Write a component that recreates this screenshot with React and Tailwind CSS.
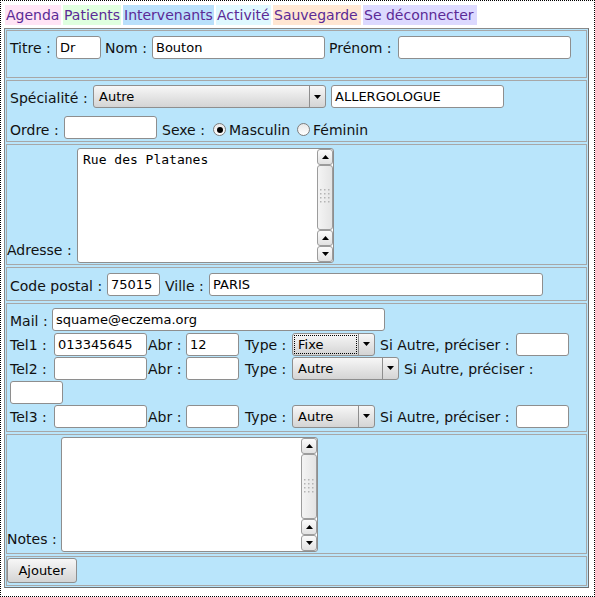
import React from "react";

const CELL = "bg-[#b9e5fb] border border-[#a7a7a7]";

function TextInput({ cls = "", value = "" }) {
  return (
    <div
      className={`h-[23px] shrink-0 bg-white border border-[#8e8e8e] rounded-[3px] pl-[3px] text-[13px] leading-[21px] text-black whitespace-nowrap overflow-hidden ${cls}`}
    >
      {value}
    </div>
  );
}

function Tri({ up = false }) {
  return (
    <svg width="7" height="4" viewBox="0 0 7 4" className="block">
      {up ? <path d="M0 4h7L3.5 0z" fill="#000" /> : <path d="M0 0h7L3.5 4z" fill="#000" />}
    </svg>
  );
}

function Select({ cls = "", value, focus = false }) {
  return (
    <div
      className={`h-[23px] shrink-0 flex rounded-[3px] border border-[#8e8e8e] bg-gradient-to-b from-[#f7f7f7] to-[#d4d4d4] text-[13px] text-black ${cls}`}
    >
      <div className="flex-1 min-w-0 p-[1px]">
        <div
          className={`h-full pl-[3px] leading-[17px] border ${focus ? "border-dotted border-black" : "border-transparent"}`}
        >
          {value}
        </div>
      </div>
      <div className="w-[16px] border-l border-[#8e8e8e] flex items-center justify-center">
        <Tri />
      </div>
    </div>
  );
}

function SbBtn({ up }) {
  return (
    <div className="h-[16px] shrink-0 rounded-[3px] border border-[#9c9c9c] bg-gradient-to-b from-[#fbfbfb] to-[#e2e2e2] flex items-center justify-center">
      <Tri up={up} />
    </div>
  );
}

function Scrollbar() {
  return (
    <div className="w-[16px] shrink-0 flex flex-col">
      <SbBtn up />
      <div className="flex-1 rounded-[3px] border border-[#9c9c9c] bg-gradient-to-r from-[#f4f4f4] to-[#e4e4e4] flex items-center justify-center">
        <svg width="10" height="16" viewBox="0 0 10 16" className="block">
          {[0, 1, 2].map((c) =>
            [0, 1, 2, 3, 4].map((r) => (
              <rect key={`${c}-${r}`} x={c * 4} y={r * 4} width="1.5" height="1.5" fill="#b4b4b4" />
            ))
          )}
        </svg>
      </div>
      <SbBtn up />
      <SbBtn />
    </div>
  );
}

function TextArea({ cls = "", value = "" }) {
  return (
    <div className={`w-[257px] h-[115px] shrink-0 bg-white border border-[#8e8e8e] rounded-[3px] flex ${cls}`}>
      <div className="flex-1 pl-[5px] pt-[2px] font-['DejaVu_Sans_Mono',monospace] text-[13px] leading-[17px] text-black whitespace-pre">
        {value}
      </div>
      <Scrollbar />
    </div>
  );
}

function Radio({ checked }) {
  return (
    <div className="w-[13px] h-[13px] shrink-0 rounded-full border border-[#7d7d7d] bg-gradient-to-b from-[#e8e8e8] to-[#ffffff] flex items-center justify-center">
      {checked && <div className="w-[6px] h-[6px] rounded-full bg-black" />}
    </div>
  );
}

function L({ children, cls = "" }) {
  return <span className={`whitespace-pre shrink-0 ${cls}`}>{children}</span>;
}

const NAV = [
  { t: "Agenda", c: "bg-[#ffe4f5] w-[56px]" },
  { t: "Patients", c: "bg-[#dfffdf] w-[58px]" },
  { t: "Intervenants", c: "bg-[#b9e0fb] w-[91px]" },
  { t: "Activité", c: "bg-[#dff8ff] w-[55px]" },
  { t: "Sauvegarde", c: "bg-[#ffe6d2] w-[88px]" },
  { t: "Se déconnecter", c: "bg-[#dcd9ff] w-[114px]" },
];

function TelRow({ n, tel, abr, sel, selW, wrap }) {
  return (
    <>
      <div className="flex items-center">
        <L cls="w-[44px] mt-[2px]">{`Tel${n} :`}</L>
        <TextInput cls="w-[93px]" value={tel} />
        <L cls="w-[39px] pl-[1px] mt-[2px]">Abr :</L>
        <TextInput cls="w-[53px]" value={abr} />
        <L cls="w-[53px] pl-[6px] mt-[2px]">Type :</L>
        <Select cls={selW} value={sel} focus={n === 1} />
        <L cls={wrap ? "pl-[5px] mt-[2px]" : "w-[141px] pl-[5px] mt-[2px]"}>Si Autre, préciser :</L>
        {!wrap && <TextInput cls="w-[53px]" />}
      </div>
      {wrap && (
        <div className="flex items-center">
          <TextInput cls="w-[53px]" />
        </div>
      )}
    </>
  );
}

export default function App() {
  return (
    <div className="w-[595px] h-[597px] border border-dotted border-black bg-white font-['DejaVu_Sans',sans-serif] text-[14px] text-[#111]">
      <div className="flex gap-[2px] ml-[4px] mt-[4px]">
        {NAV.map((n) => (
          <div key={n.t} className={`h-[20px] leading-[20px] pl-[1px] text-[#5b2a96] whitespace-nowrap ${n.c}`}>
            {n.t}
          </div>
        ))}
      </div>

      <div className="ml-[3px] mt-[3px] w-[585px] h-[560px] border border-[#8a8a8a] border-r-[#6e6e6e] border-b-[#6e6e6e] bg-[#b9e5fb] p-[1px] flex flex-col gap-[2px]">
        {/* Row 1 */}
        <div className={`${CELL} h-[48px] pt-[5px] pl-[3px]`}>
          <div className="flex items-center">
            <L cls="w-[46px] mt-[2px]">Titre :</L>
            <TextInput cls="w-[45px]" value="Dr" />
            <L cls="w-[51px] pl-[4px] mt-[2px]">Nom :</L>
            <TextInput cls="w-[173px]" value="Bouton" />
            <L cls="w-[73px] pl-[4px] mt-[2px]">Prénom :</L>
            <TextInput cls="w-[173px]" />
          </div>
        </div>

        {/* Row 2 */}
        <div className={`${CELL} h-[62px] pt-[4px] pl-[3px]`}>
          <div className="flex items-center">
            <L cls="w-[83px] mt-[3px]">Spécialité :</L>
            <Select cls="w-[233px]" value="Autre" />
            <span className="w-[5px] shrink-0" />
            <TextInput cls="w-[173px]" value="ALLERGOLOGUE" />
          </div>
          <div className="flex items-center mt-[5px]">
            <L cls="w-[54px] mt-[6px]">Ordre :</L>
            <TextInput cls="w-[93px]" />
            <L cls="w-[56px] pl-[5px] mt-[6px]">Sexe :</L>
            <div className="mt-[5px]">
              <Radio checked />
            </div>
            <L cls="w-[71px] pl-[3px] mt-[6px]">Masculin</L>
            <div className="mt-[5px]">
              <Radio />
            </div>
            <L cls="pl-[3px] mt-[6px]">Féminin</L>
          </div>
        </div>

        {/* Row 3 */}
        <div className={`${CELL} h-[121px] pt-[3px]`}>
          <div className="flex items-end">
            <L cls="w-[70px] mb-[2px]">Adresse :</L>
            <TextArea value="Rue des Platanes" />
          </div>
        </div>

        {/* Row 4 */}
        <div className={`${CELL} h-[34px] pt-[5px] pl-[3px]`}>
          <div className="flex items-center">
            <L cls="w-[97px] mt-[3px]">Code postal :</L>
            <TextInput cls="w-[53px]" value="75015" />
            <L cls="w-[49px] pl-[5px] mt-[3px]">Ville :</L>
            <TextInput cls="w-[334px]" value="PARIS" />
          </div>
        </div>

        {/* Row 5 */}
        <div className={`${CELL} h-[130px] pt-[4px] pl-[3px] flex flex-col gap-[1px]`}>
          <div className="flex items-center">
            <L cls="w-[42px] mt-[3px]">Mail :</L>
            <TextInput cls="w-[333px]" value="squame@eczema.org" />
          </div>
          <TelRow n={1} tel="013345645" abr="12" sel="Fixe" selW="w-[83px]" />
          <TelRow n={2} sel="Autre" selW="w-[107px]" wrap />
          <TelRow n={3} sel="Autre" selW="w-[83px]" />
        </div>

        {/* Row 6 */}
        <div className={`${CELL} h-[120px] pt-[2px]`}>
          <div className="flex items-end">
            <L cls="w-[54px] mb-[2px]">Notes :</L>
            <TextArea />
          </div>
        </div>

        {/* Row 7 */}
        <div className={`${CELL} h-[30px] pt-[1px]`}>
          <div className="w-[70px] h-[25px] rounded-[3px] border border-[#8e8e8e] bg-gradient-to-b from-[#f7f7f7] to-[#d4d4d4] flex items-center justify-center text-[13px] text-black">
            Ajouter
          </div>
        </div>
      </div>
    </div>
  );
}
